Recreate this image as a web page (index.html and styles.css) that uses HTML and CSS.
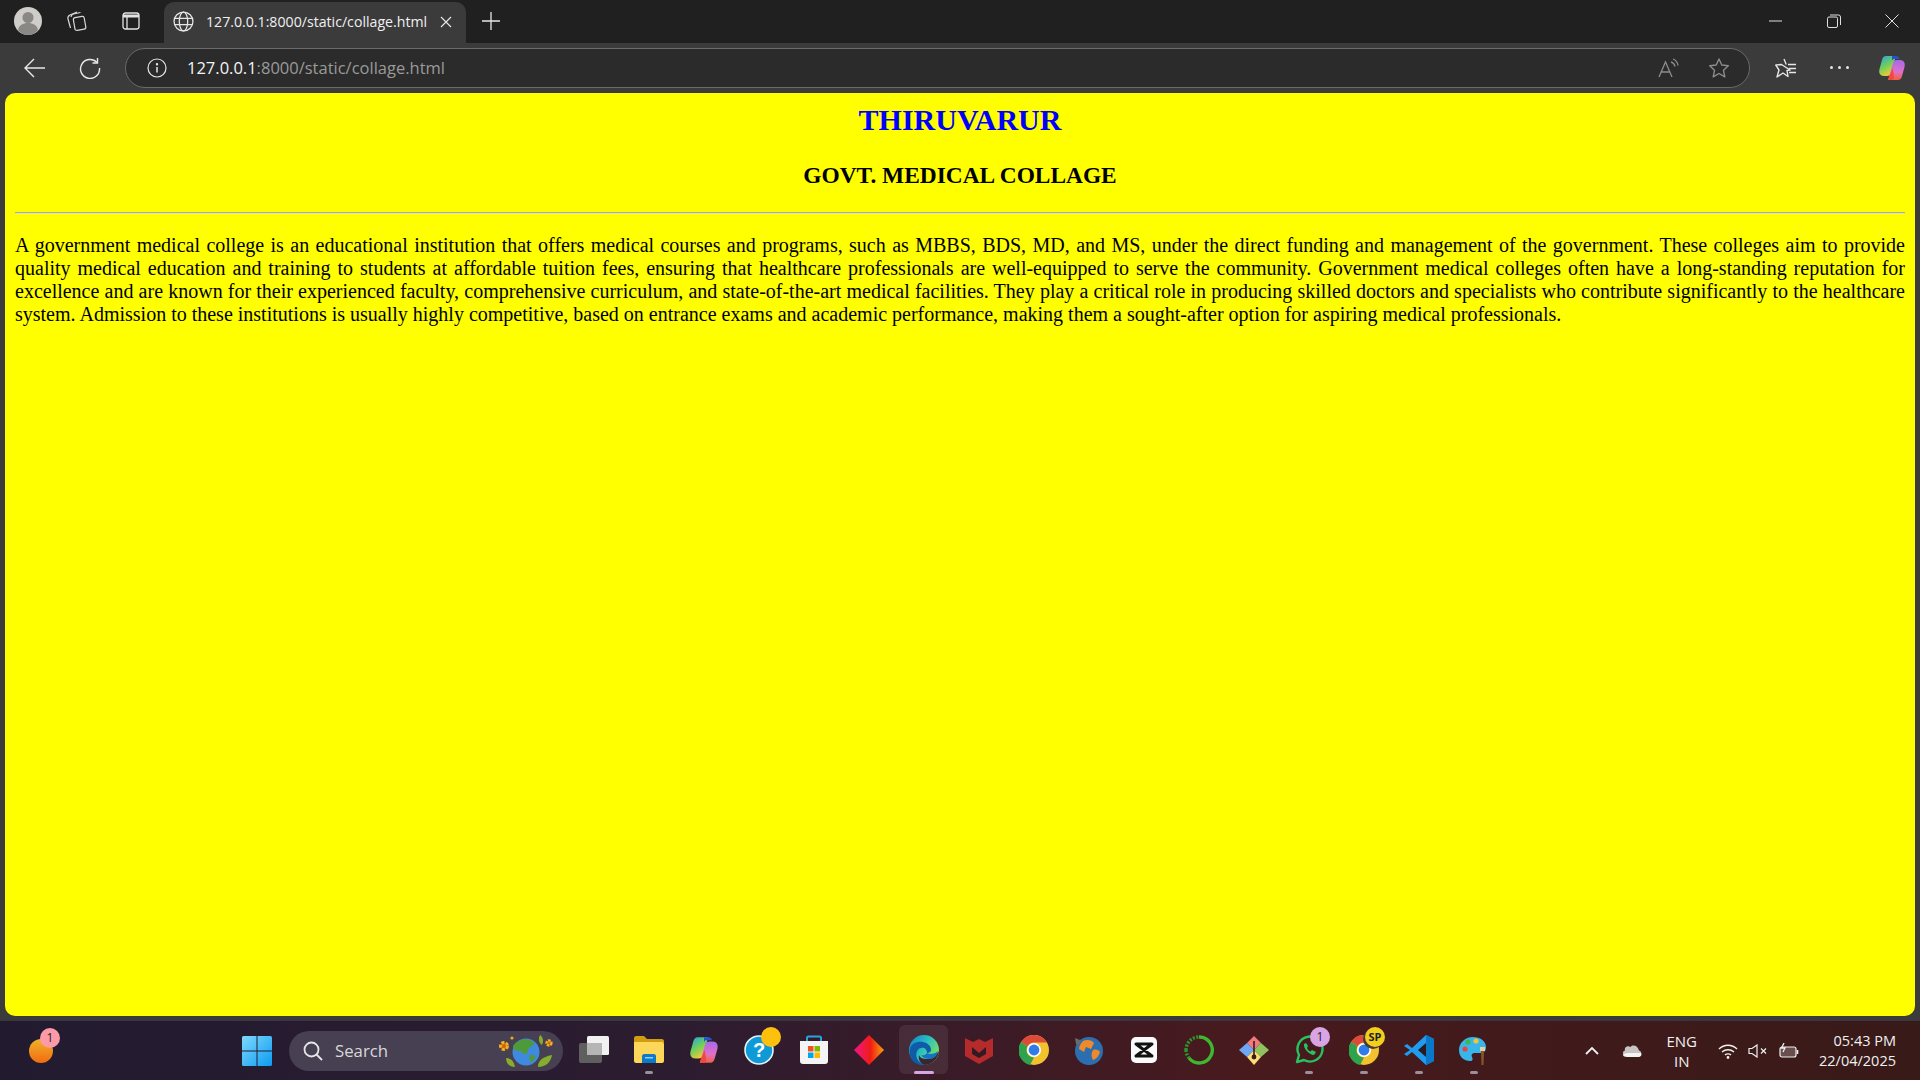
FILE: index.html
```html
<!DOCTYPE html>
<html lang="en">
<head>
  <meta charset="UTF-8" />
  <title>Collage</title>
  <link rel="stylesheet" href="styles.css">
</head>
<body>

  <!-- tab strip -->
  <div class="tabbar">
    <div class="avatar">
      <svg viewBox="0 0 28 28" width="28" height="28"><circle cx="14" cy="14" r="14" fill="#cfcdc9"/><circle cx="14" cy="10.5" r="5.5" fill="#8a8885"/><path d="M4 23c1-5 5-7 10-7s9 2 10 7c-2.500 3-6 5-10 5s-7.500-2-10-5z" fill="#8a8885"/></svg>
    </div>
    <svg class="tb-icon collections" viewBox="0 0 22 22" width="22" height="22" fill="none" stroke="#d8d8d8" stroke-width="1.200"><path d="M2 9c-.5-2 0-3 2-4l7-3"/><path d="M5 7c0-1.500 1-2.500 2.500-3l7-1.500"/><path d="M2 9l2.500 9"/><rect x="8" y="7" width="11" height="13" rx="2" transform="rotate(-10 13 13)"/></svg>
    <svg class="tb-icon tabs" viewBox="0 0 20 20" width="20" height="20" fill="none" stroke="#e2e2e2" stroke-width="1.300"><rect x="2" y="2" width="16" height="16" rx="2.500"/><path d="M2 5h16" stroke-width="3"/><path d="M6 6v12"/></svg>
    <div class="tab">
      <svg viewBox="0 0 20 20" width="21" height="21" fill="none" stroke="#e6e6e6" stroke-width="1.200"><circle cx="10" cy="10" r="9"/><ellipse cx="10" cy="10" rx="4" ry="9"/><path d="M1.500 7h17M1.500 13h17"/></svg>
      <span class="tab-title">127.0.0.1:8000/static/collage.html</span>
      <svg class="tab-close" viewBox="0 0 12 12" width="12" height="12" stroke="#e6e6e6" stroke-width="1.200"><path d="M1 1l10 10M11 1 1 11"/></svg>
    </div>
    <svg class="new-tab" viewBox="0 0 18 18" width="18" height="18" stroke="#e6e6e6" stroke-width="1.300"><path d="M9 0v18M0 9h18"/></svg>
    <div class="window-btns">
      <svg viewBox="0 0 14 14" width="14" height="14" stroke="#e0e0e0" stroke-width="1"><path d="M0 7h13"/></svg>
      <svg viewBox="0 0 14 14" width="14" height="14" fill="none" stroke="#e0e0e0" stroke-width="1"><rect x=".5" y="3" width="10" height="10.500" rx="1.500"/><path d="M3 1h8.500a2 2 0 0 1 2 2v8"/></svg>
      <svg viewBox="0 0 14 14" width="14" height="14" stroke="#e0e0e0" stroke-width="1"><path d="M.5.5l13 13M13.500.5l-13 13"/></svg>
    </div>
  </div>

  <!-- address bar -->
  <div class="toolbar">
    <svg class="nav-back" viewBox="0 0 22 22" width="22" height="22" fill="none" stroke="#e8e8e8" stroke-width="1.400"><path d="M21 11H1M10 2l-9 9 9 9"/></svg>
    <svg class="nav-reload" viewBox="0 0 22 22" width="22" height="22" fill="none" stroke="#e8e8e8" stroke-width="1.400"><path d="M18 5.500A9.500 9.500 0 1 0 20.500 11"/><path d="M18.500 1v5h-5"/></svg>
    <div class="urlbar">
      <svg viewBox="0 0 20 20" width="20" height="20" fill="none" stroke="#e6e6e6" stroke-width="1.200"><circle cx="10" cy="10" r="9"/><path d="M10 9v5.500" stroke-width="1.500"/><circle cx="10" cy="6.200" r=".6"/></svg>
      <span class="url"><span class="url-host">127.0.0.1</span>:8000/static/collage.html</span>
      <svg class="read-aloud" viewBox="0 0 22 20" width="22" height="20" fill="none" stroke="#8c8c8c" stroke-width="1.300"><path d="M1 19 7.500 4 14 19M3.200 14h8.600"/><path d="M13 4c2 .5 3.500 2 4 4.500"/><path d="M15 1c3 1 4.500 3.500 5 6.500"/></svg>
      <svg class="fav" viewBox="0 0 22 22" width="22" height="22" fill="none" stroke="#8c8c8c" stroke-width="1.400"><path d="M11 2l2.800 6 6.500.8-4.800 4.500 1.300 6.500-5.800-3.300-5.800 3.300 1.300-6.500L1.700 8.800 8.200 8z" stroke-linejoin="round"/></svg>
    </div>
    <svg class="tool-fav" viewBox="0 0 22 22" width="22" height="22" fill="none" stroke="#e6e6e6" stroke-width="1.400"><path d="M9 2l2 5h-0.500M15 13l-3 0.500 1 6-5-3.500-6 4 2-7L0.800 8 6.500 7.500z" stroke-linejoin="round"/><path d="M13 7.500h8M14 11.500h7M14 15.500h7"/></svg>
    <div class="dots"><i></i><i></i><i></i></div>
    <svg class="copilot" viewBox="0 0 28 28" width="28" height="28"><use href="#copilotMark"/></svg>
  </div>

  <!-- the page itself -->
  <div class="viewport">
    <h1 class="title">THIRUVARUR</h1>
    <h2 class="subtitle">GOVT. MEDICAL COLLAGE</h2>
    <hr class="rule">
    <p class="intro">A government medical college is an educational institution that offers medical courses and programs, such as MBBS, BDS, MD, and MS, under the direct funding and management of the government. These colleges aim to provide quality medical education and training to students at affordable tuition fees, ensuring that healthcare professionals are well-equipped to serve the community. Government medical colleges often have a long-standing reputation for excellence and are known for their experienced faculty, comprehensive curriculum, and state-of-the-art medical facilities. They play a critical role in producing skilled doctors and specialists who contribute significantly to the healthcare system. Admission to these institutions is usually highly competitive, based on entrance exams and academic performance, making them a sought-after option for aspiring medical professionals.</p>
  </div>

  <!-- windows taskbar -->
  <div class="taskbar">
    <div class="widget">
      <svg viewBox="0 0 24 24" width="24" height="28"><defs><linearGradient id="orangeG" x1="0" y1="0" x2="0" y2="1"><stop offset="0" stop-color="#eeb32c"/><stop offset="1" stop-color="#f26b10"/></linearGradient></defs><circle cx="12" cy="12" r="12" fill="url(#orangeG)"/></svg>
      <span class="badge badge-pink">1</span>
    </div>

    <svg class="start" viewBox="0 0 30 30" width="30" height="30">
      <defs><linearGradient id="winG" x1="0" y1="0" x2="1" y2="1"><stop offset="0" stop-color="#7fd8fb"/><stop offset="1" stop-color="#0b9cf2"/></linearGradient></defs>
      <rect width="30" height="30" fill="url(#winG)" rx="1.500"/>
      <path d="M14.500 0h1v30h-1zM0 14.500h30v1H0z" fill="#241c32"/>
    </svg>

    <div class="search">
      <svg viewBox="0 0 20 20" width="20" height="20" fill="none" stroke="#e6e6e6" stroke-width="1.800"><circle cx="8.500" cy="8.500" r="7"/><path d="M13.500 13.500 19 19"/></svg>
      <span class="search-text">Search</span>
      <svg class="search-art" viewBox="0 0 58 34" width="58" height="34">
        <circle cx="29" cy="18" r="13.500" fill="#3f8ae0"/>
        <path d="M22 7c5-3 12-2 15 2 1 3-3 3-5 5s0 5-3 6-4-3-7-3-6-2-6-4 3-5 6-6zM33 21c3-1 6 0 5 3s-4 5-5 3-1-5 0-6z" fill="#4e9a3a"/>
        <circle cx="7" cy="12" r="3.500" fill="#c76a10" stroke="#f4b020" stroke-width="3" stroke-dasharray="3 1.500"/>
        <circle cx="15" cy="4" r="1.600" fill="#f0a820"/>
        <circle cx="52" cy="9" r="2.500" fill="#c76a10" stroke="#f4b020" stroke-width="2.400" stroke-dasharray="2.500 1"/>
        <path d="M9 24c5 0 8 3 9 9-5 0-9-3-9-9zM41 33c0-6 4-10 14-12-1 7-6 12-14 12zM43 1c3 2 4 6 2 10-3-2-4-6-2-10z" fill="#86ad2c"/>
      </svg>
    </div>

    <div class="apps">
      <div class="app">
        <svg viewBox="0 0 30 30" width="30" height="30"><rect x="0" y="8" width="23" height="20" rx="2" fill="#5f5f5f"/><rect x="8" y="1" width="22" height="19" rx="1.500" fill="#f1f1f1"/><rect x="8" y="8" width="15" height="12" fill="#b5b5b5"/></svg>
      </div>
      <div class="app running">
        <svg viewBox="0 0 30 30" width="30" height="30"><path d="M0 3c0-1 1-2 2-2h8l3 3h15c1 0 2 1 2 2v2H0z" fill="#d09c12"/><path d="M0 7h28c1 0 2 1 2 2v17c0 1-1 2-2 2H2c-1 0-2-1-2-2z" fill="#fcd75a"/><path d="M8 21c0-1 1-2 2-2h10c1 0 2 1 2 2v7H8z" fill="#0e79c9"/><path d="M11 22h8v1.500h-8z" fill="#8bd0f5"/></svg>
      </div>
      <div class="app">
        <svg viewBox="0 0 28 28" width="30" height="30"><use href="#copilotMark"/></svg>
      </div>
      <div class="app">
        <svg viewBox="0 0 30 30" width="30" height="30"><circle cx="15" cy="15" r="14" fill="#0e9ad6" stroke="#e8f2f8" stroke-width="1.600"/><text x="15" y="22" class="help-mark">?</text></svg>
        <i class="dot-amber"></i>
      </div>
      <div class="app">
        <svg viewBox="0 0 30 30" width="30" height="30"><path d="M8 6V3c0-1 .5-1.500 1.500-1.500h11c1 0 1.500.5 1.500 1.500v3" fill="none" stroke="#27a4de" stroke-width="2"/><path d="M1 6h28v20c0 2-1 3-3 3H4c-2 0-3-1-3-3z" fill="#f4f4f4"/><rect x="9" y="11" width="5.500" height="5.500" fill="#f25022"/><rect x="15.500" y="11" width="5.500" height="5.500" fill="#7fba00"/><rect x="9" y="17.500" width="5.500" height="5.500" fill="#00a4ef"/><rect x="15.500" y="17.500" width="5.500" height="5.500" fill="#ffb900"/></svg>
      </div>
      <div class="app">
        <svg viewBox="0 0 30 30" width="30" height="30"><defs><linearGradient id="anyG"><stop offset="0" stop-color="#f0148c"/><stop offset=".55" stop-color="#f01c14"/><stop offset="1" stop-color="#f8a010"/></linearGradient></defs><path d="M15 0l15 15-15 15L0 15z" fill="url(#anyG)"/></svg>
      </div>
      <div class="app active">
        <svg viewBox="0 0 30 30" width="30" height="30"><defs><linearGradient id="edgeG" x1="0" y1="0" x2="1" y2=".6"><stop offset="0" stop-color="#0c7fd0"/><stop offset=".55" stop-color="#2cc0c0"/><stop offset="1" stop-color="#7fe05a"/></linearGradient></defs><circle cx="15" cy="15" r="15" fill="url(#edgeG)"/><path d="M30 16c-1 8-7 14-15 14-4-2-6-6-5-10 1 3 4 4 8 4 5 0 9-3 12-8z" fill="#3c2530"/><path d="M1 14C2 8 9 6 14 7c5 1 8 4 8 8 0 2-2 3-4 3 0-4-3-6-6-5-5 1-6 8-3 12 2 3 5 4 7 5C6 31-1 24 1 14z" fill="#0f5ba8"/><path d="M18 18c3 2 8 1 11-2-1 5-4 8-9 8-3 0-6-1-8-4 2 .5 4 .5 6-2z" fill="#1274c4"/></svg>
      </div>
      <div class="app">
        <svg viewBox="0 0 30 30" width="30" height="30"><path d="M1 3l8 4 6-3 6 3 8-4v18l-14 8L1 21z" fill="#b52a2a"/><path d="M8 12l7 6 7-6v7l-7 4-7-4z" fill="#321a24"/></svg>
      </div>
      <div class="app">
        <svg viewBox="0 0 30 30" width="30" height="30"><use href="#chromeMark"/></svg>
      </div>
      <div class="app">
        <svg viewBox="0 0 30 30" width="30" height="30"><circle cx="15" cy="16" r="14" fill="#2c6fb0"/><path d="M9 6c4-2 9-1 11 2l-3 6-5-2-2 5-5-3c0-3 2-6 4-8zM19 15c3-1 6 0 7 2-1 4-4 7-7 8-2-3-2-7 0-10z" fill="#ee8a2c"/><path d="M1 3l5 2-1 6-3-2z" fill="#6a6a6a"/></svg>
      </div>
      <div class="app">
        <svg viewBox="0 0 26 26" width="26" height="26"><rect width="26" height="26" rx="5" fill="#fafafa"/><path d="M5 7h16l-16 12h16z" fill="none" stroke="#111" stroke-width="3" stroke-linejoin="round"/></svg>
      </div>
      <div class="app">
        <svg viewBox="0 0 30 30" width="30" height="30" fill="none"><path d="M15 2a13 13 0 1 1-10 21" stroke="#3db82e" stroke-width="3.400"/><path d="M2 15a13 13 0 0 1 13-13" stroke="#2c9a2a" stroke-width="3.400" stroke-dasharray="2 1.500"/><path d="M2 15a13 13 0 0 0 3 8" stroke="#2c9a2a" stroke-width="3.400" stroke-dasharray="2 1.500"/></svg>
      </div>
      <div class="app">
        <svg viewBox="0 0 30 30" width="30" height="30"><path d="M15 15 8 8l7-7 7 7z" fill="#ee7a80"/><path d="M15 15l-7-7-8 7 8 7z" fill="#6ea6f5"/><path d="M15 15l7-7 8 7-8 7z" fill="#8fc25c"/><path d="M15 15l-7 7 7 8 7-8z" fill="#f8dc74"/><path d="M15 6v18" stroke="#3a1a20" stroke-width="1.600"/><circle cx="15" cy="22" r="2.400" fill="#3a1a20"/></svg>
      </div>
      <div class="app running">
        <svg viewBox="0 0 30 30" width="30" height="30" fill="none"><path d="M3 27l2-7a12.500 12.500 0 1 1 5 5z" stroke="#25c45f" stroke-width="2.400" stroke-linejoin="round"/><path d="M10 9c-1 4 5 11 10 11l2-3-4-2-1.500 1.500c-1.500-.5-3-2-3.500-3.500L14 11l-2-3z" fill="#25c45f"/></svg>
        <span class="badge badge-lilac">1</span>
      </div>
      <div class="app running">
        <svg viewBox="0 0 30 30" width="30" height="30"><use href="#chromeMark"/></svg>
        <span class="badge badge-sp">SP</span>
      </div>
      <div class="app running">
        <svg viewBox="0 0 30 30" width="30" height="30"><path d="M22 0l8 4v22l-8 4L8 17l-5 4-3-2 6-4-6-4 3-2 5 4z" fill="#1f9cf0"/><path d="M22 0l8 4v22l-8 4z" fill="#0a78c8"/><path d="M22 8l-8 7 8 7z" fill="#2a1a20"/></svg>
      </div>
      <div class="app running">
        <svg viewBox="0 0 30 30" width="30" height="30"><path d="M14 2C6 2 0 8 0 15c0 7 5 11 11 11 3 0 3-2 2-4s0-4 3-4h5c4 0 6-2 6-6 0-6-6-10-13-10z" fill="#38b6ec"/><circle cx="6" cy="14" r="2.600" fill="#e8443a"/><circle cx="9" cy="7" r="2.600" fill="#3cb84a"/><circle cx="17" cy="6" r="2.600" fill="#f4c430"/><path d="M21 12h5v4h-5z" fill="#e6d2a0"/><path d="M22 16h3l-.5 14h-2z" fill="#8a5426"/></svg>
      </div>
    </div>

    <div class="tray">
      <svg class="tray-chevron" viewBox="0 0 14 9" width="14" height="9" fill="none" stroke="#f0f0f0" stroke-width="1.800"><path d="M1 8l6-6 6 6"/></svg>
      <svg class="tray-cloud" viewBox="0 0 20 13" width="20" height="13"><path d="M5 12h12c3 0 3-5 0-5.500C16 2 11 0 8.500 3 5 1 2 4 3 6.500 0 7 0 12 5 12z" fill="#c9c3c3"/><path d="M5 13h11c3 0 4-2 3-4H6c-3 0-5 1-5 2s2 2 4 2z" fill="#f4f4f4"/></svg>
      <div class="lang"><span>ENG</span><span>IN</span></div>
      <svg class="tray-wifi" viewBox="0 0 20 16" width="20" height="16" fill="none" stroke="#f0f0f0" stroke-width="1.400"><path d="M1 6c5-5 13-5 18 0M4 9c3.500-3 8.500-3 12 0M7 12c1.500-1.500 4.500-1.500 6 0"/><circle cx="10" cy="14.500" r=".7" fill="#f0f0f0"/></svg>
      <svg class="tray-sound" viewBox="0 0 20 14" width="20" height="14" fill="none" stroke="#f0f0f0" stroke-width="1.200"><path d="M1 4.500h3L9 1v12L4 9.500H1z"/><path d="M13 4.500l5 5M18 4.500l-5 5"/></svg>
      <svg class="tray-battery" viewBox="0 0 20 16" width="20" height="16" fill="none" stroke="#f0f0f0" stroke-width="1.200"><rect x="1" y="4" width="16" height="10" rx="2" fill="#f0f0f0" fill-opacity=".25"/><path d="M18.500 7v4" stroke-width="1.600"/><path d="M5 0 2.500 5H6L4 9" stroke-width="1.300"/></svg>
      <div class="clock"><span>05:43 PM</span><span>22/04/2025</span></div>
    </div>
  </div>

  <!-- shared icon shapes -->
  <svg class="defs-only" width="0" height="0">
    <defs>
      <linearGradient id="cpA" x1="0" y1="0" x2=".5" y2="1"><stop offset="0" stop-color="#2a9fe8"/><stop offset=".55" stop-color="#6fd05a"/><stop offset="1" stop-color="#f4c83a"/></linearGradient>
      <linearGradient id="cpB" x1=".5" y1="0" x2=".5" y2="1"><stop offset="0" stop-color="#a868e8"/><stop offset=".6" stop-color="#e070c8"/><stop offset="1" stop-color="#f2603c"/></linearGradient>
      <g id="chromeMark">
        <circle cx="15" cy="15" r="15" fill="#f2c22e"/>
        <path d="M15 0a15 15 0 0 1 13 7.500H15A7.500 7.500 0 0 0 8.500 11.300L2 7A15 15 0 0 1 15 0z" fill="#dd4a3a"/>
        <path d="M2 7l6.500 4.300A7.500 7.500 0 0 0 15 22.500L11 30A15 15 0 0 1 2 7z" fill="#2fa24c"/>
        <circle cx="15" cy="15" r="7" fill="#fff"/>
        <circle cx="15" cy="15" r="5.400" fill="#2f7be8"/>
      </g>
      <g id="copilotMark">
        <path d="M8 2h10l-5 17c-.5 2-2 3-4 3H6C2 22 .5 19 1.500 15L4 6c.6-2.500 2-4 4-4z" fill="url(#cpA)"/>
        <path d="M20 26H10l5-17c.5-2 2-3 4-3h3c4 0 5.500 3 4.500 7L24 22c-.6 2.500-2 4-4 4z" fill="url(#cpB)"/>
        <path d="M14 2h4c2 0 3 1 3.500 3L16 5c-1 0-1.500.5-2 2z" fill="#2456c8"/>
        <path d="M14 26h-4l4.500-12 1.500 8c.3 2-.5 4-2 4z" fill="#f04a3c"/>
      </g>
    </defs>
  </svg>

</body>
</html>
```

FILE: styles.css
```css
* {
  box-sizing: border-box;
}
html, body {
  margin: 0;
  height: 100%;
}
body {
  width: 1920px;
  height: 1080px;
  overflow: hidden;
  background: #3b3b3b;
  display: flex;
  flex-direction: column;
  font-family: "Open Sans", "Noto Sans", sans-serif;
}
svg {
  display: block;
  flex: none;
}

/* tab strip */
.tabbar {
  height: 43px;
  flex: none;
  background: #202020;
  display: flex;
  align-items: center;
  padding-left: 14px;
  padding-bottom: 2px;
}
.tabbar .collections {
  margin-left: 24px;
}
.tabbar .tabs {
  margin-left: 33px;
}
.tab {
  width: 302px;
  height: 41px;
  align-self: flex-end;
  margin-bottom: -2px;
  margin-left: 23px;
  padding-left: 9px;
  padding-bottom: 2px;
  background: #3b3b3b;
  border-radius: 10px 10px 0 0;
  display: flex;
  align-items: center;
}
.tab-title {
  margin-left: 12px;
  font-size: 14.150px;
  color: #f0f0f0;
  white-space: nowrap;
}
.tab-close {
  margin-left: auto;
  margin-right: 14px;
}
.new-tab {
  margin-left: 16px;
}
.window-btns {
  margin-left: auto;
  margin-right: 21px;
  display: flex;
  gap: 44px;
}

/* address bar */
.toolbar {
  height: 50px;
  flex: none;
  display: flex;
  align-items: center;
  padding-left: 24px;
  padding-bottom: 1px;
}
.nav-reload {
  margin-left: 33px;
}
.urlbar {
  width: 1625px;
  height: 40px;
  margin-left: 24px;
  border: 1px solid #6a6a6a;
  border-radius: 20px;
  background: #2b2b2b;
  display: flex;
  align-items: center;
  padding-left: 21px;
}
.url {
  margin-left: 20px;
  font-size: 16.500px;
  color: #9a9a9a;
  white-space: nowrap;
}
.url-host {
  color: #f4f4f4;
}
.read-aloud {
  margin-left: auto;
}
.fav {
  margin-left: 28px;
  margin-right: 19px;
}
.tool-fav {
  margin-left: 25px;
}
.dots {
  margin-left: 33px;
  display: flex;
  gap: 5px;
}
.dots i {
  width: 3px;
  height: 3px;
  border-radius: 50%;
  background: #e6e6e6;
}
.copilot {
  margin-left: 29px;
}

/* page */
.viewport {
  flex: none;
  height: 923px;
  margin: 0 5px;
  padding: 0 10px;
  background: #ffff00;
  border-radius: 10px;
  font-family: "Liberation Serif", serif;
  color: #000;
  overflow: hidden;
}
.title {
  margin: 10px 0 0;
  text-align: center;
  font-size: 30px;
  color: #0000ff;
}
.subtitle {
  margin: 25px 0 0;
  text-align: center;
  font-size: 23.400px;
}
.rule {
  margin: 23px 0 0;
  border: 0;
  border-top: 1px solid #a8a8a8;
  border-bottom: 1px solid #e4e4a0;
}
.intro {
  margin: 20px 0 0;
  font-size: 20px;
  text-align: justify;
}

/* taskbar */
.taskbar {
  flex: none;
  height: 60px;
  margin-top: 4px;
  border-top: 1px solid #3a3640;
  background: linear-gradient(90deg, #221b30 0%, #2c1c30 35%, #481a1e 65%, #381a18 100%);
  display: flex;
  align-items: center;
  position: relative;
  color: #f0f0f0;
}
.widget {
  position: relative;
  margin-left: 29px;
}
.badge {
  position: absolute;
  width: 20px;
  height: 20px;
  border-radius: 50%;
  font-size: 12px;
  line-height: 20px;
  text-align: center;
  color: #222;
}
.badge-pink {
  background: #fd9aa8;
  top: -9px;
  right: -7px;
}
.badge-lilac {
  background: #d8a4e4;
  top: 2px;
  right: 3px;
}
.badge-sp {
  background: #f2cf1c;
  box-shadow: -2px 2px 0 #4a3a3a;
  top: 2px;
  right: 3px;
  font-size: 11px;
  font-weight: 700;
}
.start {
  margin-left: 189px;
}
.search {
  width: 274px;
  height: 40px;
  margin-left: 17px;
  padding: 0 8px 0 14px;
  border-radius: 20px;
  background: #473f52;
  display: flex;
  align-items: center;
}
.search-text {
  margin-left: 12px;
  font-size: 16.800px;
  color: #d8d8d8;
}
.search-art {
  margin-left: auto;
}
.apps {
  display: flex;
  gap: 6px;
  margin-left: 6px;
  margin-bottom: 2px;
}
.app {
  position: relative;
  width: 49px;
  height: 49px;
  display: flex;
  align-items: center;
  justify-content: center;
  border-radius: 6px;
}
.app.active {
  background: rgba(255, 255, 255, 0.08);
}
.app.running::after,
.app.active::after {
  content: "";
  position: absolute;
  left: 50%;
  bottom: 0;
  width: 8px;
  height: 3px;
  margin-left: -4px;
  border-radius: 2px;
  background: #9a9097;
}
.app.active::after {
  width: 20px;
  margin-left: -10px;
  background: #d8a4e4;
}
.dot-amber {
  position: absolute;
  top: 2px;
  right: 2px;
  width: 20px;
  height: 20px;
  border-radius: 50%;
  background: #fdc00c;
}
.help-mark {
  font-family: "Liberation Sans", sans-serif;
  font-size: 20px;
  font-weight: 700;
  fill: #fff;
  text-anchor: middle;
}

/* tray */
.tray {
  display: flex;
  align-items: center;
  margin-left: auto;
  padding-right: 24px;
}
.tray-cloud {
  margin-left: 23px;
}
.lang {
  margin-left: 24px;
  display: flex;
  flex-direction: column;
  align-items: center;
  font-size: 15px;
  line-height: 20px;
}
.tray-wifi {
  margin-left: 21px;
}
.tray-sound {
  margin-left: 10px;
}
.tray-battery {
  margin-left: 11px;
}
.clock {
  margin-left: 20px;
  display: flex;
  flex-direction: column;
  align-items: flex-end;
  font-size: 14.500px;
  line-height: 20px;
}
.defs-only {
  position: absolute;
}
```
